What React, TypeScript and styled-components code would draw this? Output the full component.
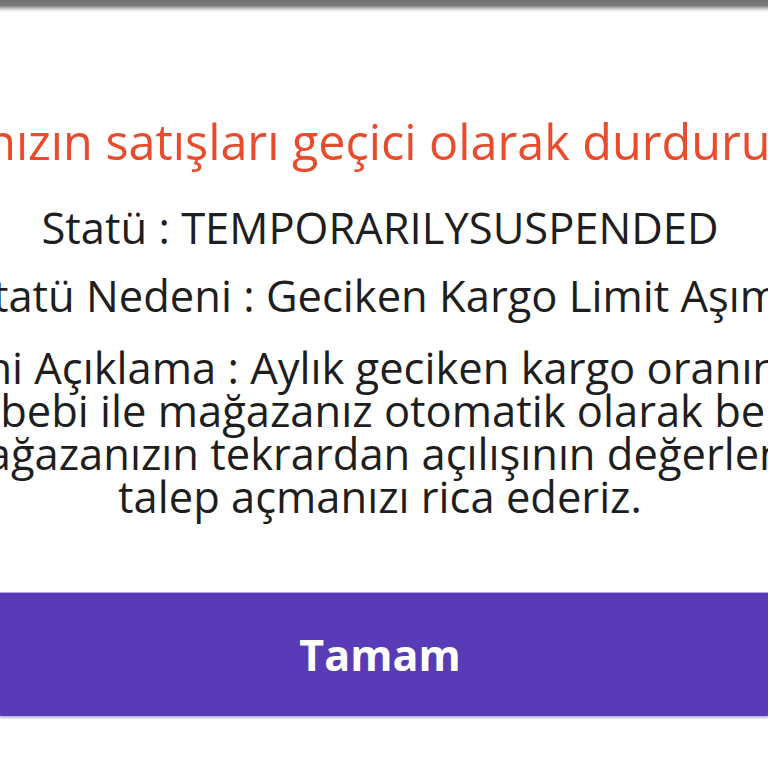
import styled, { createGlobalStyle } from "styled-components"

const Global = createGlobalStyle`
  html, body {
    margin: 0;
    padding: 0;
    background: #ffffff;
    overflow: hidden;
  }
  body {
    font-family: "Open Sans", "Liberation Sans", sans-serif;
  }
`

const Page = styled.div`
  width: 768px;
  height: 768px;
  display: flex;
  flex-direction: column;
  overflow: hidden;
`

const TopEdge = styled.div`
  height: 12px;
  flex-shrink: 0;
  background: linear-gradient(#707070 0%, #7a7a7a 45%, #dcdcdc 80%, #ffffff 100%);
`

const Body = styled.div`
  display: flex;
  flex-direction: column;
  align-items: center;
  padding-top: 103px;
  margin-right: 8px;
`

const Title = styled.div`
  color: #ea4b2d;
  font-size: 48.5px;
  line-height: 52px;
  white-space: nowrap;
  margin-bottom: 39px;
`

const Line = styled.div<{ $gap?: number }>`
  color: #1e1e1e;
  font-size: 43.5px;
  line-height: 43px;
  white-space: nowrap;
  text-align: center;
  margin-bottom: ${(p) => p.$gap ?? 0}px;
`

const OkButton = styled.button`
  flex-shrink: 0;
  margin-top: 75px;
  width: 100%;
  height: 123px;
  border: none;
  background: #5a3bb7;
  box-shadow: 0 -1px 0 #b8a8ef, 0 2px 2px rgba(60, 40, 120, 0.35);
  color: #ffffff;
  font-family: "Open Sans", "Liberation Sans", sans-serif;
  font-weight: 700;
  font-size: 43px;
  padding: 0 8px 0 0;
`

export default function App() {
  return (
    <Page>
      <Global />
      <TopEdge />
      <Body>
        <Title>Mağazanızın satışları geçici olarak durdurulmuştur</Title>
        <Line $gap={25}>Statü : TEMPORARILYSUSPENDED</Line>
        <Line $gap={29}>Statü Nedeni : Geciken Kargo Limit Aşımı</Line>
        <Line>Statü Nedeni Açıklama : Aylık geciken kargo oranınız %10'u aş</Line>
        <Line>sebebi ile mağazanız otomatik olarak belir</Line>
        <Line>Mağazanızın tekrardan açılışının değerlend</Line>
        <Line>talep açmanızı rica ederiz.</Line>
      </Body>
      <OkButton>Tamam</OkButton>
    </Page>
  )
}
